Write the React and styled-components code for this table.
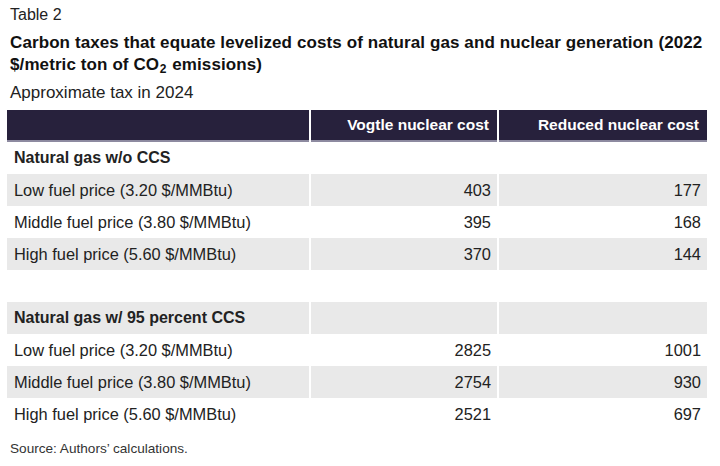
import React from 'react';
import styled, { createGlobalStyle } from 'styled-components';

const GlobalStyle = createGlobalStyle`
  body {
    margin: 0;
    background: #ffffff;
    font-family: "Liberation Sans", Arial, sans-serif;
    color: #222222;
  }
`;

const Page = styled.div`
  width: 720px;
  height: 466px;
  padding: 4px 13px 0 7px;
  box-sizing: border-box;
`;

const Label = styled.div`
  font-size: 16px;
  line-height: 22px;
  padding-left: 3px;
`;

const Title = styled.h2`
  margin: 6px 0 0 0;
  padding-left: 3px;
  font-size: 17px;
  line-height: 22px;
  letter-spacing: 0.1px;
  font-weight: 700;
  color: #111111;
  sub {
    font-size: 12px;
    line-height: 0;
    vertical-align: -3px;
    margin: 0 1px 0 0.5px;
  }
`;

const Subtitle = styled.div`
  margin-top: 6px;
  padding-left: 3px;
  font-size: 17px;
  line-height: 22px;
`;

const Grid = styled.div`
  margin-top: 6px;
  display: grid;
  grid-template-columns: 302px 186px 208px;
  column-gap: 2px;
`;

const HeadCell = styled.div`
  height: 30px;
  background: #27213c;
  border-bottom: 2px solid #8d8aa0;
  color: #ffffff;
  font-weight: 700;
  font-size: 15.5px;
  display: flex;
  align-items: center;
  justify-content: flex-end;
  padding: 0 8px;
`;

const Cell = styled.div`
  height: 32px;
  display: flex;
  align-items: center;
  justify-content: ${({ $num }) => ($num ? 'flex-end' : 'flex-start')};
  padding: 0 ${({ $num }) => ($num ? '6px' : '0')} 0 ${({ $num }) => ($num ? '0' : '7px')};
  background: ${({ $shade }) => ($shade ? '#e9e9e9' : 'transparent')};
  font-size: ${({ $bold }) => ($bold ? '16px' : '16.4px')};
  font-weight: ${({ $bold }) => ($bold ? 700 : 400)};
  color: #222222;
`;

const Source = styled.div`
  margin-top: 11px;
  padding-left: 3px;
  font-size: 13.6px;
  color: #333333;
`;

const rows = [
  { label: 'Natural gas w/o CCS', group: true },
  { label: 'Low fuel price (3.20 $/MMBtu)', a: '403', b: '177', shade: true },
  { label: 'Middle fuel price (3.80 $/MMBtu)', a: '395', b: '168' },
  { label: 'High fuel price (5.60 $/MMBtu)', a: '370', b: '144', shade: true },
  { label: '', a: '', b: '' },
  { label: 'Natural gas w/ 95 percent CCS', group: true, shade: true },
  { label: 'Low fuel price (3.20 $/MMBtu)', a: '2825', b: '1001' },
  { label: 'Middle fuel price (3.80 $/MMBtu)', a: '2754', b: '930', shade: true },
  { label: 'High fuel price (5.60 $/MMBtu)', a: '2521', b: '697' },
];

const App = () => (
  <Page>
    <GlobalStyle />
    <Label>Table 2</Label>
    <Title>
      Carbon taxes that equate levelized costs of natural gas and nuclear generation (2022
      $/metric ton of CO<sub>2</sub> emissions)
    </Title>
    <Subtitle>Approximate tax in 2024</Subtitle>
    <Grid>
      <HeadCell />
      <HeadCell>Vogtle nuclear cost</HeadCell>
      <HeadCell>Reduced nuclear cost</HeadCell>
      {rows.map((r, i) => (
        <React.Fragment key={i}>
          <Cell $shade={r.shade} $bold={r.group}>{r.label}</Cell>
          <Cell $shade={r.shade} $num>{r.a}</Cell>
          <Cell $shade={r.shade} $num>{r.b}</Cell>
        </React.Fragment>
      ))}
    </Grid>
    <Source>Source: Authors’ calculations.</Source>
  </Page>
);

export default App;
